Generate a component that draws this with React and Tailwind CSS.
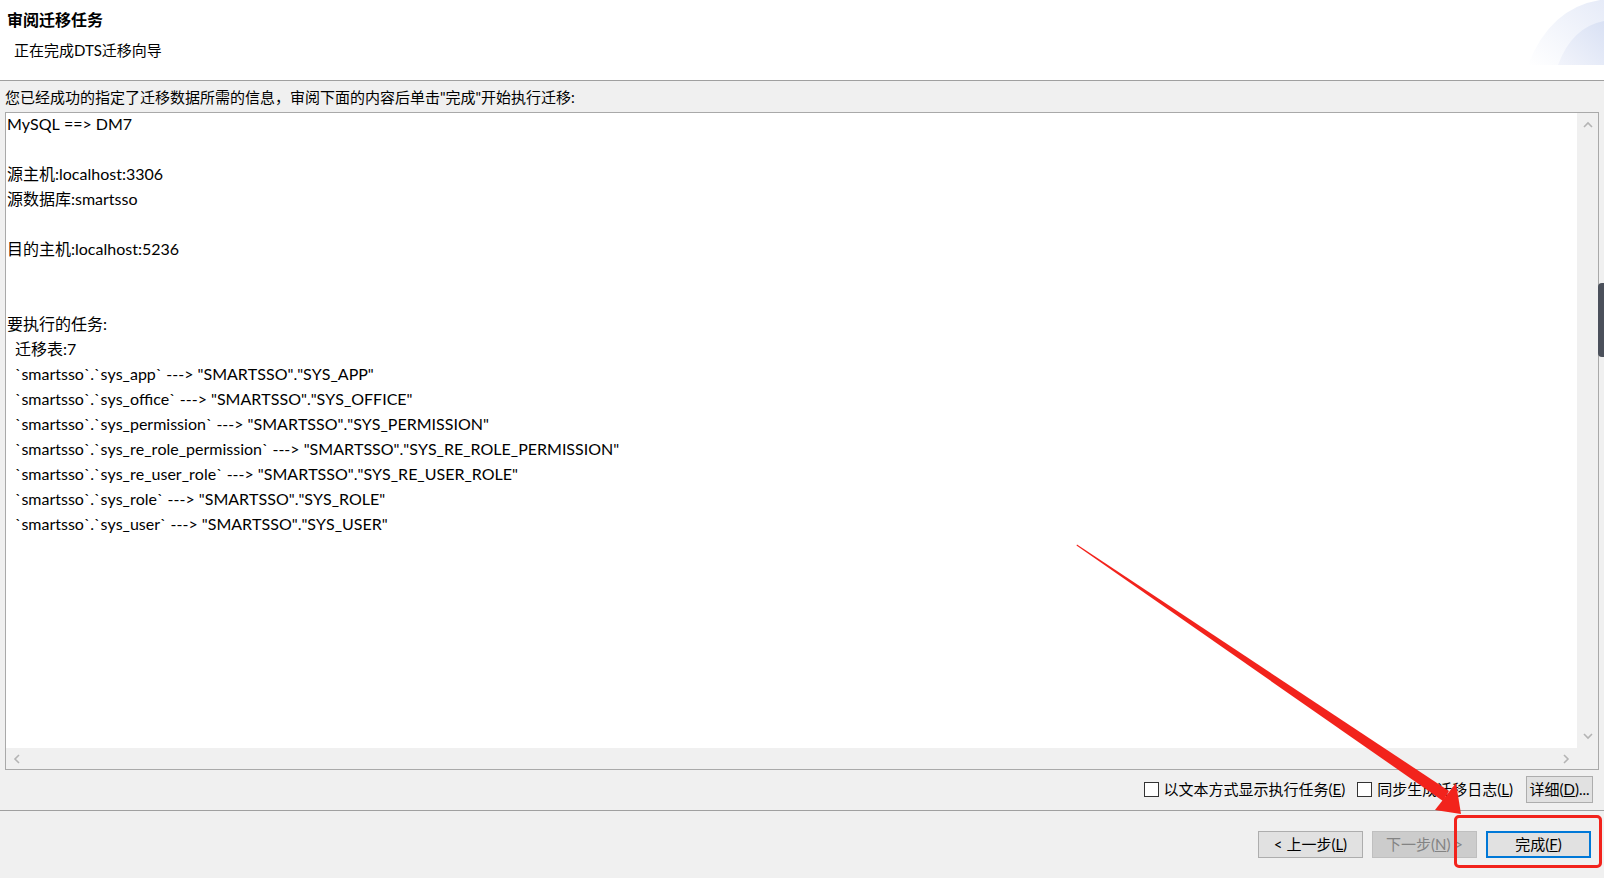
import React from 'react';

const FONT = "font-['Lato','Noto_Sans_CJK_SC',sans-serif]";

const lines = [
  { t: 'MySQL ==> DM7' },
  { t: '' },
  { t: '源主机:localhost:3306' },
  { t: '源数据库:smartsso' },
  { t: '' },
  { t: '目的主机:localhost:5236' },
  { t: '' },
  { t: '' },
  { t: '要执行的任务:' },
  { t: '迁移表:7', indent: true },
  { t: '`smartsso`.`sys_app` ---> "SMARTSSO"."SYS_APP"', indent: true },
  { t: '`smartsso`.`sys_office` ---> "SMARTSSO"."SYS_OFFICE"', indent: true },
  { t: '`smartsso`.`sys_permission` ---> "SMARTSSO"."SYS_PERMISSION"', indent: true },
  { t: '`smartsso`.`sys_re_role_permission` ---> "SMARTSSO"."SYS_RE_ROLE_PERMISSION"', indent: true },
  { t: '`smartsso`.`sys_re_user_role` ---> "SMARTSSO"."SYS_RE_USER_ROLE"', indent: true },
  { t: '`smartsso`.`sys_role` ---> "SMARTSSO"."SYS_ROLE"', indent: true },
  { t: '`smartsso`.`sys_user` ---> "SMARTSSO"."SYS_USER"', indent: true },
];

function Chevron({ dir }) {
  const pts = {
    up: '1,6 5,2 9,6',
    down: '1,2 5,6 9,2',
    left: '6,1 2,5 6,9',
    right: '2,1 6,5 2,9',
  }[dir];
  const w = dir === 'up' || dir === 'down' ? 10 : 8;
  const h = dir === 'up' || dir === 'down' ? 8 : 10;
  return (
    <svg width={w} height={h} viewBox={`0 0 ${w} ${h}`}>
      <polyline points={pts} fill="none" stroke="#b4b4b4" strokeWidth="1.6" />
    </svg>
  );
}

function Check({ label, mnemonic }) {
  return (
    <label className="flex items-center gap-[5px] text-[15px] text-black">
      <span className="w-[15px] h-[15px] border border-[#333333] bg-white" />
      <span>
        {label}(<span className="underline">{mnemonic}</span>)
      </span>
    </label>
  );
}

function WizardButton({ children, primary, disabled }) {
  return (
    <button
      className={
        primary
          ? 'w-[105px] h-[27px] bg-[#e1e1e1] border-2 border-[#0078d7] text-[15px] text-black'
          : disabled
          ? 'w-[105px] h-[27px] bg-[#cccccc] border border-[#bfbfbf] text-[15px] text-[#838383]'
          : 'w-[105px] h-[27px] bg-[#e1e1e1] border border-[#adadad] text-[15px] text-black'
      }
    >
      {children}
    </button>
  );
}

export default function App() {
  return (
    <div className={`relative w-[1604px] h-[878px] bg-[#f0f0f0] overflow-hidden ${FONT} text-black`}>
      {/* header */}
      <div className="relative h-[81px] bg-white border-b border-[#a0a0a0]">
        <div className="pl-[7px] pt-[9px] text-[16px] leading-[22px] font-bold">审阅迁移任务</div>
        <div className="pl-[14px] mt-[9px] text-[15px] leading-[20px]">正在完成DTS迁移向导</div>
        <svg className="absolute right-0 top-0" width="76" height="66" viewBox="0 0 76 66">
          <defs>
            <linearGradient id="g1" x1="0" y1="1" x2="1" y2="0">
              <stop offset="0" stopColor="#ffffff" />
              <stop offset="1" stopColor="#e6ebf8" />
            </linearGradient>
            <linearGradient id="g2" x1="0" y1="1" x2="1" y2="0">
              <stop offset="0" stopColor="#f2f4fb" />
              <stop offset="1" stopColor="#d9e1f4" />
            </linearGradient>
          </defs>
          <path d="M0,65 Q22,8 72,0 L76,0 L76,65 Z" fill="url(#g1)" />
          <path d="M30,65 Q44,27 76,21 L76,65 Z" fill="url(#g2)" />
        </svg>
      </div>

      {/* instruction */}
      <div className="pl-[5px] pt-[6px] text-[15px] leading-[20px]">
        您已经成功的指定了迁移数据所需的信息，审阅下面的内容后单击"完成"开始执行迁移:
      </div>

      {/* summary text area */}
      <div className="ml-[5px] mt-[5px] w-[1594px] h-[658px] border border-[#a9a9a9] flex flex-col">
        <div className="flex h-[635px]">
          <div className="flex-1 bg-white pl-[1px] text-[16px] leading-[25px] overflow-hidden [font-kerning:none]">
            <div className="mt-[-2px]">
              {lines.map((l, i) => (
                <div key={i} className={`h-[25px] whitespace-pre ${l.indent ? 'pl-[8px]' : ''}`}>
                  {l.t}
                </div>
              ))}
            </div>
          </div>
          <div className="w-[21px] bg-[#f0f0f0] flex flex-col items-center justify-between py-[8px]">
            <Chevron dir="up" />
            <Chevron dir="down" />
          </div>
        </div>
        <div className="flex h-[21px]">
          <div className="flex-1 flex items-center justify-between pl-[7px] pr-[7px]">
            <Chevron dir="left" />
            <Chevron dir="right" />
          </div>
          <div className="w-[21px]" />
        </div>
      </div>

      {/* options row */}
      <div className="mt-[6px] h-[27px] flex items-center justify-end pr-[11px]">
        <Check label="以文本方式显示执行任务" mnemonic="E" />
        <div className="w-[12px]" />
        <Check label="同步生成迁移日志" mnemonic="L" />
        <button className="ml-[13px] w-[67px] h-[27px] bg-[#e1e1e1] border border-[#adadad] text-[15px]">
          详细(<span className="underline">D</span>)...
        </button>
      </div>

      {/* separator */}
      <div className="mt-[7px] border-t border-[#a0a0a0]" />

      {/* navigation buttons */}
      <div className="mt-[20px] flex justify-end gap-[9px] pr-[13px]">
        <WizardButton>
          &lt; 上一步(<span className="underline">L</span>)
        </WizardButton>
        <WizardButton disabled>
          下一步(<span className="underline">N</span>) &gt;
        </WizardButton>
        <WizardButton primary>
          完成(<span className="underline">F</span>)
        </WizardButton>
      </div>

      {/* screen edge widget */}
      <div className="absolute left-[1598px] top-[283px] w-[10px] h-[74px] bg-[#4b505b] rounded-l-[4px]" />

      {/* red annotation box */}
      <div className="absolute left-[1454px] top-[815px] w-[148px] h-[53px] border-[3px] border-[#f2231c] rounded-[5px]" />

      {/* red arrow */}
      <svg className="absolute left-0 top-0 pointer-events-none" width="1604" height="878">
        <polygon points="1077,544.5 1449,791 1443,801 1076.5,545.5" fill="#f2231c" />
        <polygon points="1461,814 1435,810 1456,783" fill="#f2231c" />
      </svg>
    </div>
  );
}
